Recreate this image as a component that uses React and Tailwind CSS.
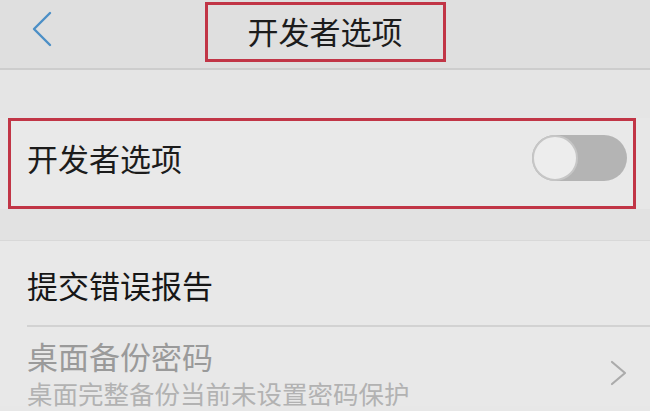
import React from "react";

const cjk = { fontFamily: '"Noto Sans CJK SC", "Noto Sans", sans-serif' };

function BackIcon() {
  return (
    <svg width="22" height="36" viewBox="0 0 22 36" fill="none">
      <path d="M19 2 L3 18 L19 34" stroke="#4b8fc6" strokeWidth="2.4" strokeLinecap="round" strokeLinejoin="round" />
    </svg>
  );
}

function Toggle() {
  return (
    <div className="relative w-[95px] h-[46px] rounded-full bg-[#b4b4b4]">
      <div className="absolute left-0 top-0 w-[46px] h-[46px] rounded-full bg-[#ededed] border-[2px] border-[#c6c6c6]" />
    </div>
  );
}

export default function App() {
  return (
    <div className="w-[650px] h-[411px] overflow-hidden bg-[#e7e7e7] text-[#1c1c1c]" style={cjk}>
      {/* header */}
      <div className="grid grid-cols-[1fr_241px_1fr] h-[70px] bg-[#dfdfdf] border-b-[2px] border-[#cdcdcd]">
        <div className="flex items-start pt-[11px] pl-[31px]">
          <BackIcon />
        </div>
        <div className="mt-[2px] h-[60px] border-[3px] border-[#c13546] flex items-center justify-center pb-[4px]">
          <span className="text-[31px] leading-[31px]">开发者选项</span>
        </div>
        <div />
      </div>

      <div className="h-[48px] bg-[#e5e5e5]" />

      {/* highlighted toggle row */}
      <div className="ml-[8px] mr-[14px] h-[91px] border-[3px] border-[#c13546] bg-[#e9e9e9] flex items-center justify-between pl-[16px] pr-[6px] pb-[12px]">
        <span className="text-[31px] leading-[31px]">开发者选项</span>
        <Toggle />
      </div>

      <div className="h-[32px] bg-[#e2e2e2] border-b border-[#d8d8d8]" />

      <div className="bg-[#e8e8e8]">
        <div className="h-[84px] flex items-center pl-[27px] pt-[3px]">
          <span className="text-[31px] leading-[31px] text-[#161616]">提交错误报告</span>
        </div>
        <div className="ml-[27px] h-[2px] bg-[#d2d2d2]" />
        <div className="flex items-center justify-between pl-[27px] pr-[22px]">
          <div className="flex flex-col pt-[13px]">
            <span className="text-[31px] leading-[31px] text-[#9a9a9a]">桌面备份密码</span>
            <span className="mt-[9px] text-[25.5px] leading-[26px] text-[#b2b2b2]">桌面完整备份当前未设置密码保护</span>
          </div>
          <svg width="18" height="26" viewBox="0 0 18 26" fill="none" className="mt-[12px]">
            <path d="M2 2 L15 13 L2 24" stroke="#ababab" strokeWidth="2.2" strokeLinecap="round" strokeLinejoin="round" />
          </svg>
        </div>
      </div>
    </div>
  );
}
